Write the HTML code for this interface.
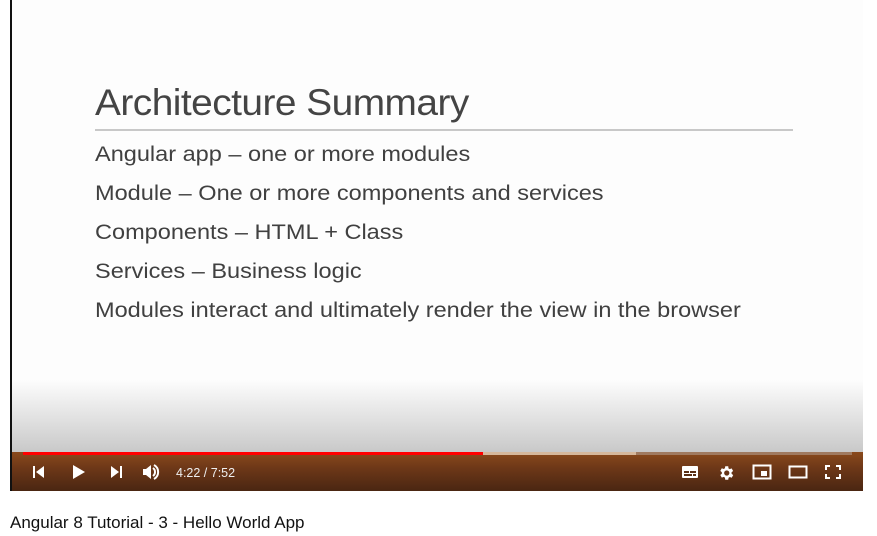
<!DOCTYPE html>
<html><head><style>
body{margin:0;width:877px;height:536px;background:#fff;position:relative;overflow:hidden;font-family:"Liberation Sans",sans-serif}
#v{position:absolute;left:10px;top:0;width:853px;height:491px;background:#fdfdfd;border-left:2px solid #111;box-sizing:border-box}
#grad{position:absolute;left:0;right:0;top:380px;height:73px;background:linear-gradient(#fdfdfd,#c8c8c8)}
#bar{position:absolute;left:0;right:0;top:452px;height:39px;background:linear-gradient(#8a4a1c,#6e3818 40%,#4a2612)}
.t{position:absolute;left:83px;color:#404040;white-space:nowrap;transform:scaleX(1.12);transform-origin:left}
h1{position:absolute;left:83px;top:82px;margin:0;font-weight:normal;font-size:37px;color:#444;letter-spacing:-0.5px;transform:scaleX(1.05);transform-origin:left}
#rule{position:absolute;left:83px;top:129px;width:698px;height:2px;background:#c8c8c8}
.l{font-size:21px}
#prog{position:absolute;left:11px;top:452px;height:3px}
.ic{position:absolute;top:464px}
#time{position:absolute;left:164px;top:466px;font-size:12.5px;color:#eee}
#title{position:absolute;left:10px;top:513px;font-size:17px;color:#111}
</style></head><body>
<div id="v">
<h1>Architecture Summary</h1>
<div id="rule"></div>
<div class="t l" style="top:143px">Angular app – one or more modules</div>
<div class="t l" style="top:182px">Module – One or more components and services</div>
<div class="t l" style="top:221px">Components – HTML + Class</div>
<div class="t l" style="top:260px">Services – Business logic</div>
<div class="t l" style="top:299px">Modules interact and ultimately render the view in the browser</div>
<div id="grad"></div>
<div id="bar"></div>
<div id="prog" style="width:829px;background:#a07a60"></div>
<div id="prog" style="width:613px;background:#d6b89c"></div>
<div id="prog" style="width:460px;background:#f00"></div>
<svg class="ic" style="left:20px" width="14" height="16" viewBox="0 0 14 16"><rect x="1" y="2" width="2" height="12" fill="#fff"/><path d="M12 2L4 8l8 6z" fill="#fff"/></svg>
<svg class="ic" style="left:60px" width="14" height="16" viewBox="0 0 14 16"><path d="M1 1l12 7-12 7z" fill="#fff"/></svg>
<svg class="ic" style="left:97px" width="14" height="16" viewBox="0 0 14 16"><path d="M2 2l8 6-8 6z" fill="#fff"/><rect x="11" y="2" width="2" height="12" fill="#fff"/></svg>
<svg class="ic" style="left:130px" width="20" height="16" viewBox="0 0 20 16"><path d="M1 5h3l5-4v14l-5-4H1z" fill="#fff"/><path d="M11 4a5 5 0 0 1 0 8M12 1a8 8 0 0 1 0 14" stroke="#fff" stroke-width="2" fill="none"/></svg>
<div id="time">4:22 / 7:52</div>
<svg class="ic" style="left:669px" width="18" height="16" viewBox="0 0 18 16"><rect x="1" y="2" width="16" height="12" rx="1" fill="#fff"/><rect x="3" y="7" width="5" height="2" fill="#5a2e14"/><rect x="9" y="7" width="6" height="2" fill="#5a2e14"/><rect x="3" y="10" width="8" height="2" fill="#5a2e14"/><rect x="12" y="10" width="3" height="2" fill="#5a2e14"/></svg>
<svg class="ic" style="left:705px" width="18" height="18" viewBox="0 0 24 24"><path fill="#fff" d="M19.4 13a7.5 7.5 0 0 0 0-2l2.1-1.6-2-3.5-2.5 1a7 7 0 0 0-1.7-1L15 3h-4l-.4 2.6a7 7 0 0 0-1.7 1l-2.5-1-2 3.5L6.5 11a7.5 7.5 0 0 0 0 2l-2.1 1.6 2 3.5 2.5-1a7 7 0 0 0 1.7 1L11 21h4l.4-2.6a7 7 0 0 0 1.7-1l2.5 1 2-3.5zM13 15.5a3.5 3.5 0 1 1 0-7 3.5 3.5 0 0 1 0 7z"/></svg>
<svg class="ic" style="left:740px" width="20" height="16" viewBox="0 0 20 16"><rect x="1.5" y="1.5" width="17" height="13" stroke="#fff" stroke-width="2" fill="none"/><rect x="9" y="7" width="6" height="5" fill="#fff"/></svg>
<svg class="ic" style="left:776px" width="20" height="16" viewBox="0 0 20 16"><rect x="1.5" y="2.5" width="17" height="11" stroke="#fff" stroke-width="2" fill="none"/></svg>
<svg class="ic" style="left:812px" width="18" height="16" viewBox="0 0 18 16"><path d="M2 6V2h4M12 2h4v4M16 10v4h-4M6 14H2v-4" stroke="#fff" stroke-width="2" fill="none"/></svg>
</div>
<div id="title">Angular 8 Tutorial - 3 - Hello World App</div>
</body></html>
